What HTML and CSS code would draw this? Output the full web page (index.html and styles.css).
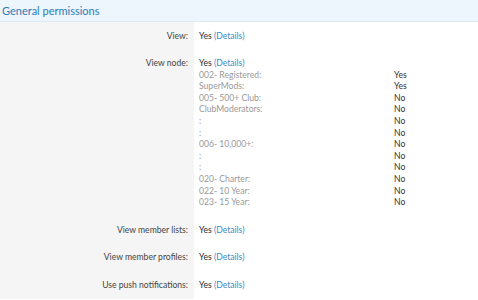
FILE: index.html
```html
<!DOCTYPE html>
<html lang="en">

<head>
  <meta charset="UTF-8">
  <title>General permissions</title>
  <link rel="stylesheet" href="styles.css">
</head>

<body>
  <div class="block">
    <h2 class="block-header">General permissions</h2>

    <dl class="pair">
      <dt>View:</dt>
      <dd>Yes <a href="#">(Details)</a></dd>
    </dl>

    <dl class="pair">
      <dt>View node:</dt>
      <dd>
        Yes <a href="#">(Details)</a>
        <div class="node-list">
          <span>002- Registered:</span><span>Yes</span>
          <span>SuperMods:</span><span>Yes</span>
          <span>005- 500+ Club:</span><span>No</span>
          <span>ClubModerators:</span><span>No</span>
          <span>:</span><span>No</span>
          <span>:</span><span>No</span>
          <span>006- 10,000+:</span><span>No</span>
          <span>:</span><span>No</span>
          <span>:</span><span>No</span>
          <span>020- Charter:</span><span>No</span>
          <span>022- 10 Year:</span><span>No</span>
          <span>023- 15 Year:</span><span>No</span>
        </div>
      </dd>
    </dl>

    <dl class="pair">
      <dt>View member lists:</dt>
      <dd>Yes <a href="#">(Details)</a></dd>
    </dl>

    <dl class="pair">
      <dt>View member profiles:</dt>
      <dd>Yes <a href="#">(Details)</a></dd>
    </dl>

    <dl class="pair">
      <dt>Use push notifications:</dt>
      <dd>Yes <a href="#">(Details)</a></dd>
    </dl>
  </div>
</body>

</html>
```

FILE: styles.css
```css
body {
  margin: 0;
  font-family: 'Lato', 'Open Sans', sans-serif;
  font-size: 8.6px;
  color: #2a2a2a;
  background-color: #fff;
}

.block {
  width: 478px;
}

.block-header {
  margin: 0;
  height: 21px;
  padding: 0 2px;
  font-size: 11px;
  font-weight: normal;
  line-height: 22px;
  color: #2b7bb5;
  background-color: #edf5fd;
  border-bottom: 1px solid #dfe8f1;
}

.pair {
  display: flex;
  margin: 0;
  line-height: 11.6px;
}

.pair dt {
  width: 188px;
  flex-shrink: 0;
  padding: 8.5px 6px 7.5px 0;
  text-align: right;
  color: #444;
  background-color: #f5f5f5;
}

.pair dd {
  margin: 0;
  padding: 8.5px 0 7.5px 5px;
}

.pair a {
  color: #3a8bc6;
  text-decoration: none;
}

.node-list {
  display: grid;
  grid-template-columns: 195px auto;
  color: #999;
}

.node-list span:nth-child(even) {
  color: #333;
}
```
